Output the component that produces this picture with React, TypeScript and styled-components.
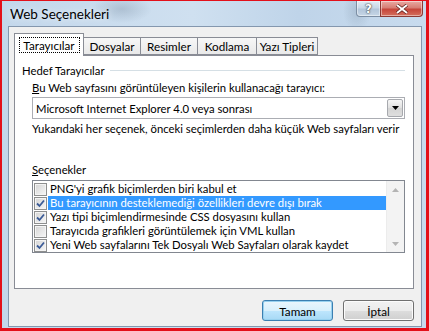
import React from 'react';
import styled, { createGlobalStyle } from 'styled-components';

const GlobalStyle = createGlobalStyle`
  html, body {
    margin: 0;
    padding: 0;
    background: #fff;
  }
  body {
    font-family: Lato, "Noto Sans", sans-serif;
    font-size: 11.3px;
    color: #000;
  }
`;

const Frame = styled.div`
  box-sizing: border-box;
  width: 429px;
  height: 331px;
  display: flex;
  flex-direction: column;
  border-style: solid;
  border-color: #e3101a;
  border-width: 1px 3px 3px 2px;
  background:
    radial-gradient(ellipse 30px 14px at 120px 8px, rgba(120, 140, 160, 0.35), transparent),
    radial-gradient(ellipse 14px 20px at 355px 10px, rgba(120, 140, 160, 0.3), transparent),
    linear-gradient(90deg, #c3d7eb 0%, #cfe0f0 45%, #bfd4e9 70%, #c8dbee 100%);
`;

const TitleBar = styled.div`
  height: 25px;
  display: flex;
  align-items: flex-start;
  flex: 0 0 auto;
`;

const Title = styled.div`
  padding: 5px 0 0 8px;
  line-height: 16px;
  font-size: 13.5px;
  text-shadow: 0 0 6px rgba(255, 255, 255, 0.9);
`;

const Controls = styled.div`
  margin-left: auto;
  margin-right: 3px;
  display: flex;
`;

const CaptionButton = styled.div<{ $close?: boolean }>`
  box-sizing: border-box;
  width: ${(p) => (p.$close ? 43 : 25)}px;
  height: 16px;
  display: flex;
  align-items: center;
  justify-content: center;
  border: 1px solid ${(p) => (p.$close ? '#8b3a35' : '#7c8ea3')};
  border-top: none;
  border-radius: ${(p) => (p.$close ? '0 0 4px 0' : '0 0 0 4px')};
  margin-left: ${(p) => (p.$close ? -1 : 0)}px;
  background: ${(p) =>
    p.$close
      ? 'linear-gradient(#e9aaa3 0%, #d77e74 45%, #c6453a 55%, #d4705f 100%)'
      : 'linear-gradient(#e2ebf4 0%, #c9d8e7 45%, #b3c6da 55%, #c6d6e6 100%)'};
  box-shadow: inset 0 0 0 1px rgba(255, 255, 255, 0.45);
  color: #fff;
  font-family: "DejaVu Sans", sans-serif;
  font-weight: bold;
  font-size: 12px;
  text-shadow: 0 0 1px #333, 0 0 2px #333;
`;

const Client = styled.div`
  flex: 1;
  margin: 0 4px 1px 6px;
  border: 1px solid #8497ae;
  background: #f0f0f0;
  padding: 6px 7px 0 5px;
  display: flex;
  flex-direction: column;
`;

const TabStrip = styled.div`
  display: flex;
  align-items: flex-start;
  height: 23px;
  margin-bottom: -1px;
  position: relative;
  z-index: 1;
`;

const Tab = styled.div<{ $active?: boolean; $w: number }>`
  box-sizing: border-box;
  width: ${(p) => p.$w}px;
  height: ${(p) => (p.$active ? 23 : 18)}px;
  margin-top: ${(p) => (p.$active ? 0 : 4)}px;
  margin-left: ${(p) => (p.$active ? 0 : -1)}px;
  border: 1px solid #898c95;
  border-bottom: ${(p) => (p.$active ? 'none' : '1px solid #898c95')};
  background: ${(p) => (p.$active ? '#fff' : 'linear-gradient(#f7f7f7, #e9e9e9)')};
  position: relative;
  z-index: ${(p) => (p.$active ? 2 : 1)};
  display: flex;
  justify-content: center;
  align-items: ${(p) => (p.$active ? 'flex-start' : 'center')};
  padding-top: ${(p) => (p.$active ? 3 : 0)}px;
  line-height: 14px;
  font-size: 11.7px;
`;

const Focus = styled.span`
  box-sizing: border-box;
  width: 61px;
  height: 16px;
  border: 1px dotted #000;
  display: flex;
  align-items: center;
  justify-content: center;
`;

const Panel = styled.div`
  box-sizing: border-box;
  height: 234px;
  border: 1px solid #898c95;
  background: #fff;
  padding: 5px 8px 0 7px;
  display: flex;
  flex-direction: column;
`;

const GroupHeader = styled.div`
  display: flex;
  align-items: center;
  height: 16px;
  margin-top: 1px;
`;

const GroupLine = styled.div`
  flex: 1;
  height: 1px;
  margin-left: 5px;
  background: #d5dfe5;
`;

const Label = styled.div<{ $top: number }>`
  margin: ${(p) => p.$top}px 0 0 10px;
  line-height: 16px;
  height: 16px;
  white-space: nowrap;
`;

const Key = styled.span`
  text-decoration: underline;
`;

const Select = styled.div`
  box-sizing: border-box;
  height: 22px;
  margin: 1px 0 0 10px;
  border: 1px solid #abadb3;
  display: flex;
  align-items: center;
  padding: 0 1px 0 3px;
`;

const SelectText = styled.span`
  flex: 1;
`;

const DropButton = styled.div`
  box-sizing: border-box;
  width: 16px;
  height: 18px;
  border: 1px solid #a7a9ae;
  border-radius: 2px;
  background: linear-gradient(#f6f6f6, #e0e0e0 50%, #d4d4d4 51%, #dedede);
  display: flex;
  align-items: center;
  justify-content: center;
`;

const ListBox = styled.div`
  box-sizing: border-box;
  height: 73px;
  margin: 2px 0 0 10px;
  border: 1px solid #828790;
  display: flex;
`;

const Rows = styled.div`
  flex: 1;
  padding: 1px 0 0 1px;
`;

const Row = styled.div`
  display: flex;
  align-items: center;
  height: 14px;
`;

const Box = styled.div`
  box-sizing: border-box;
  width: 13px;
  height: 13px;
  flex: 0 0 13px;
  border: 1px solid #8e8f8f;
  background: linear-gradient(135deg, #d4d4d4, #f7f7f7);
  box-shadow: inset 0 0 0 1px #f4f4f4;
  display: flex;
  align-items: center;
  justify-content: center;
`;

const RowText = styled.span<{ $sel?: boolean }>`
  flex: 1;
  height: 14px;
  line-height: 14px;
  margin-left: 1px;
  padding-left: 2px;
  white-space: nowrap;
  background: ${(p) => (p.$sel ? '#3399ff' : 'transparent')};
  color: ${(p) => (p.$sel ? '#fff' : '#000')};
`;

const ScrollBar = styled.div`
  width: 17px;
  background: #f3f3f3;
  border-left: 1px solid #ececec;
  display: flex;
  flex-direction: column;
  justify-content: space-between;
`;

const ScrollArrow = styled.div`
  height: 17px;
  display: flex;
  align-items: center;
  justify-content: center;
`;

const ButtonRow = styled.div`
  display: flex;
  justify-content: flex-end;
  gap: 10px;
  margin-top: 11px;
`;

const Button = styled.div<{ $default?: boolean }>`
  box-sizing: border-box;
  width: 71px;
  height: 21px;
  border: 1px solid ${(p) => (p.$default ? '#3c7fb1' : '#707070')};
  border-radius: 3px;
  background: ${(p) =>
    p.$default
      ? 'linear-gradient(#eaf6fd, #d9f0fc 50%, #bee6fd 51%, #a7d9f5)'
      : 'linear-gradient(#f2f2f2, #ebebeb 50%, #dddddd 51%, #cfcfcf)'};
  box-shadow: inset 0 0 0 1px ${(p) => (p.$default ? '#98d1ef' : '#fcfcfc')};
  display: flex;
  align-items: center;
  justify-content: center;
  font-size: 11.7px;
`;

const Check = () => (
  <svg width="9" height="9" viewBox="0 0 9 9">
    <path d="M1 4.5 L3.5 7 L8 1.5" fill="none" stroke="#3b5b97" strokeWidth="1.8" />
  </svg>
);

const Arrow = ({ up, color }: { up?: boolean; color: string }) => (
  <svg width="7" height="4" viewBox="0 0 7 4">
    <path d={up ? 'M0 4 L3.5 0 L7 4 Z' : 'M0 0 L7 0 L3.5 4 Z'} fill={color} />
  </svg>
);

const tabs = [
  { name: 'Tarayıcılar', w: 70 },
  { name: 'Dosyalar', w: 58 },
  { name: 'Resimler', w: 58 },
  { name: 'Kodlama', w: 60 },
  { name: 'Yazı Tipleri', w: 62 },
];

const options = [
  { text: "PNG'yi grafik biçimlerden biri kabul et", checked: false },
  { text: 'Bu tarayıcının desteklemediği özellikleri devre dışı bırak', checked: true, sel: true },
  { text: 'Yazı tipi biçimlendirmesinde CSS dosyasını kullan', checked: true },
  { text: 'Tarayıcıda grafikleri görüntülemek için VML kullan', checked: false },
  { text: 'Yeni Web sayfalarını Tek Dosyalı Web Sayfaları olarak kaydet', checked: true },
];

const App = () => (
  <>
    <GlobalStyle />
    <Frame>
      <TitleBar>
        <Title>Web Seçenekleri</Title>
        <Controls>
          <CaptionButton>?</CaptionButton>
          <CaptionButton $close>
            <svg width="14" height="10" viewBox="0 0 14 10">
              <path d="M2 1 L12 9 M12 1 L2 9" stroke="#5a1c18" strokeWidth="3.4" />
              <path d="M2 1 L12 9 M12 1 L2 9" stroke="#fff" strokeWidth="2" />
            </svg>
          </CaptionButton>
        </Controls>
      </TitleBar>
      <Client>
        <TabStrip>
          {tabs.map((t, i) =>
            i === 0 ? (
              <Tab key={t.name} $active $w={t.w}>
                <Focus>{t.name}</Focus>
              </Tab>
            ) : (
              <Tab key={t.name} $w={t.w}>
                {t.name}
              </Tab>
            )
          )}
        </TabStrip>
        <Panel>
          <GroupHeader>
            Hedef Tarayıcılar
            <GroupLine />
          </GroupHeader>
          <Label $top={2}>
            <Key>B</Key>u Web sayfasını görüntüleyen kişilerin kullanacağı tarayıcı:
          </Label>
          <Select>
            <SelectText>Microsoft Internet Explorer 4.0 veya sonrası</SelectText>
            <DropButton>
              <Arrow color="#000" />
            </DropButton>
          </Select>
          <Label $top={2}>Yukarıdaki her seçenek, önceki seçimlerden daha küçük Web sayfaları verir</Label>
          <Label $top={25}>
            <Key>S</Key>eçenekler
          </Label>
          <ListBox>
            <Rows>
              {options.map((o) => (
                <Row key={o.text}>
                  <Box>{o.checked && <Check />}</Box>
                  <RowText $sel={o.sel}>{o.text}</RowText>
                </Row>
              ))}
            </Rows>
            <ScrollBar>
              <ScrollArrow>
                <Arrow up color="#b4b4b4" />
              </ScrollArrow>
              <ScrollArrow>
                <Arrow color="#b4b4b4" />
              </ScrollArrow>
            </ScrollBar>
          </ListBox>
        </Panel>
        <ButtonRow>
          <Button $default>Tamam</Button>
          <Button>İptal</Button>
        </ButtonRow>
      </Client>
    </Frame>
  </>
);

export default App;
